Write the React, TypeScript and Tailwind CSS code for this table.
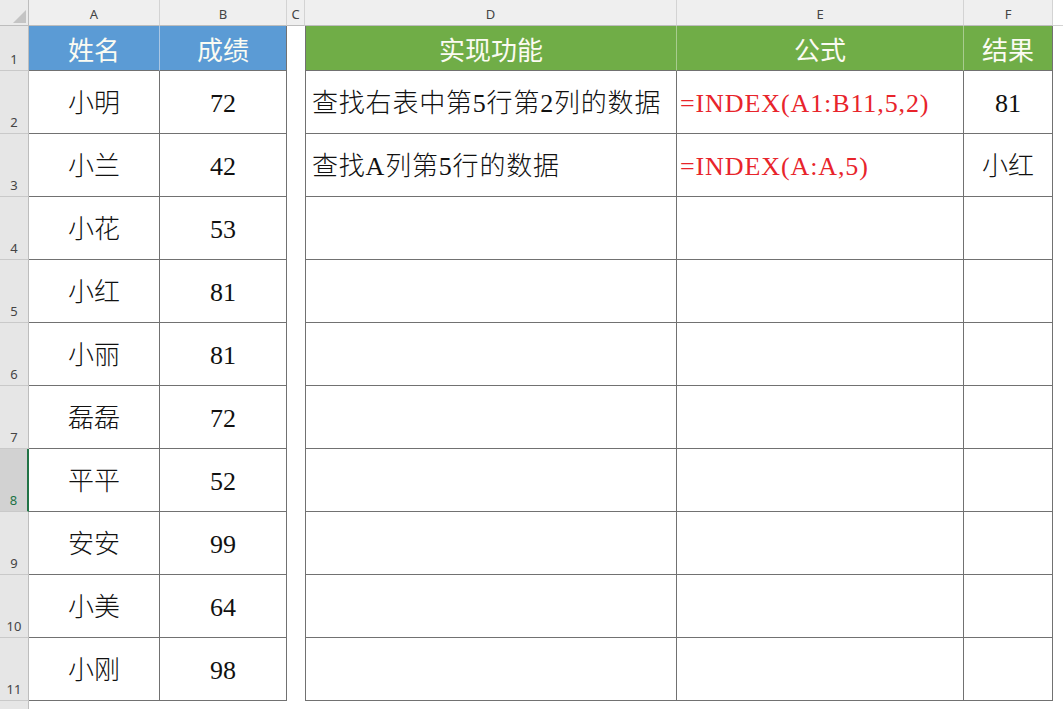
import React from 'react';

const people = [
  { name: '小明', score: '72' },
  { name: '小兰', score: '42' },
  { name: '小花', score: '53' },
  { name: '小红', score: '81' },
  { name: '小丽', score: '81' },
  { name: '磊磊', score: '72' },
  { name: '平平', score: '52' },
  { name: '安安', score: '99' },
  { name: '小美', score: '64' },
  { name: '小刚', score: '98' },
];

const lookups = [
  { task: '查找右表中第5行第2列的数据', formula: '=INDEX(A1:B11,5,2)', result: '81' },
  { task: '查找A列第5行的数据', formula: '=INDEX(A:A,5)', result: '小红' },
];

const serif = "font-['Liberation_Serif','Noto_Sans_CJK_SC',serif]";
const cellText = `${serif} text-[26px] font-light text-[#111] pt-[3px]`;
const headText = "font-['Noto_Sans_CJK_SC',sans-serif] text-[26px] text-[#fbfbf2]";
const line = 'border-[#717171]';

const letters = ['A', 'B', 'C', 'D', 'E', 'F'];

function RowNum({ n, active }: { n: number; active?: boolean }) {
  return (
    <div
      className={`flex items-end justify-center pb-[1px] text-[13px] font-['Noto_Sans',sans-serif] border-b border-[#c9c9c9] ${
        active
          ? 'bg-[#d2d2d2] text-[#217346] border-r-2 border-r-[#217346]'
          : 'bg-[#e6e6e6] text-[#444] border-r border-r-[#bdbdbd]'
      }`}
    >
      {n}
    </div>
  );
}

export default function App() {
  return (
    <div className="w-[1063px] h-[709px] overflow-hidden bg-white">
      <div className="grid h-full grid-cols-[29px_131px_127px_18px_372px_287px_89px_10px] grid-rows-[26px_45px_repeat(10,63px)_1fr]">
        {/* column headers */}
        <div className="relative bg-[#ebebeb] border-r border-b border-[#bdbdbd]">
          <svg className="absolute right-[2px] bottom-[2px]" width="13" height="13" viewBox="0 0 13 13">
            <polygon points="13,0 13,13 0,13" fill="#c4c4c4" />
          </svg>
        </div>
        {letters.map((l) => (
          <div
            key={l}
            className="flex items-end justify-center pb-[1px] bg-[#efefef] border-r border-b border-r-[#d3d3d3] border-b-[#bdbdbd] text-[13px] text-[#444] font-['Noto_Sans',sans-serif]"
          >
            {l}
          </div>
        ))}
        <div className="bg-white border-b border-[#d3d3d3]" />

        {/* row 1: table headers */}
        <RowNum n={1} />
        <div className={`flex items-center justify-center bg-[#5b9bd5] border-r border-b border-r-[#a9c6e4] ${line} ${headText}`}>姓名</div>
        <div className={`flex items-center justify-center bg-[#5b9bd5] border-r border-b ${line} ${headText}`}>成绩</div>
        <div className="bg-white" />
        <div className={`flex items-center justify-center bg-[#70ad47] border-l border-r border-b border-r-[#a8cc8f] ${line} ${headText}`}>实现功能</div>
        <div className={`flex items-center justify-center bg-[#70ad47] border-r border-b border-r-[#a8cc8f] ${line} ${headText}`}>公式</div>
        <div className={`flex items-center justify-center bg-[#70ad47] border-r border-b ${line} ${headText}`}>结果</div>
        <div className="bg-white" />

        {/* rows 2-11 */}
        {people.map((p, i) => {
          const lk = lookups[i];
          return (
            <React.Fragment key={p.name + i}>
              <RowNum n={i + 2} active={i + 2 === 8} />
              <div className={`flex items-center justify-center border-r border-b ${line} ${cellText}`}>{p.name}</div>
              <div className={`flex items-center justify-center border-r border-b ${line} ${cellText}`}>{p.score}</div>
              <div className="bg-white" />
              <div className={`flex items-center pl-[6px] whitespace-nowrap tracking-[0.8px] border-l border-r border-b ${line} ${cellText}`}>
                {lk?.task}
              </div>
              <div
                className={`flex items-center pl-[3px] pt-[3px] whitespace-nowrap tracking-[0.9px] border-r border-b ${line} font-['Liberation_Serif',serif] text-[26px] text-[#e8242b]`}
              >
                {lk?.formula}
              </div>
              <div className={`flex items-center justify-center border-r border-b ${line} ${cellText}`}>{lk?.result}</div>
              <div className="bg-white" />
            </React.Fragment>
          );
        })}

        {/* row 12 (cut off) */}
        <div className="bg-[#e6e6e6] border-r border-[#bdbdbd]" />
        <div className="col-span-7 bg-white" />
      </div>
    </div>
  );
}
